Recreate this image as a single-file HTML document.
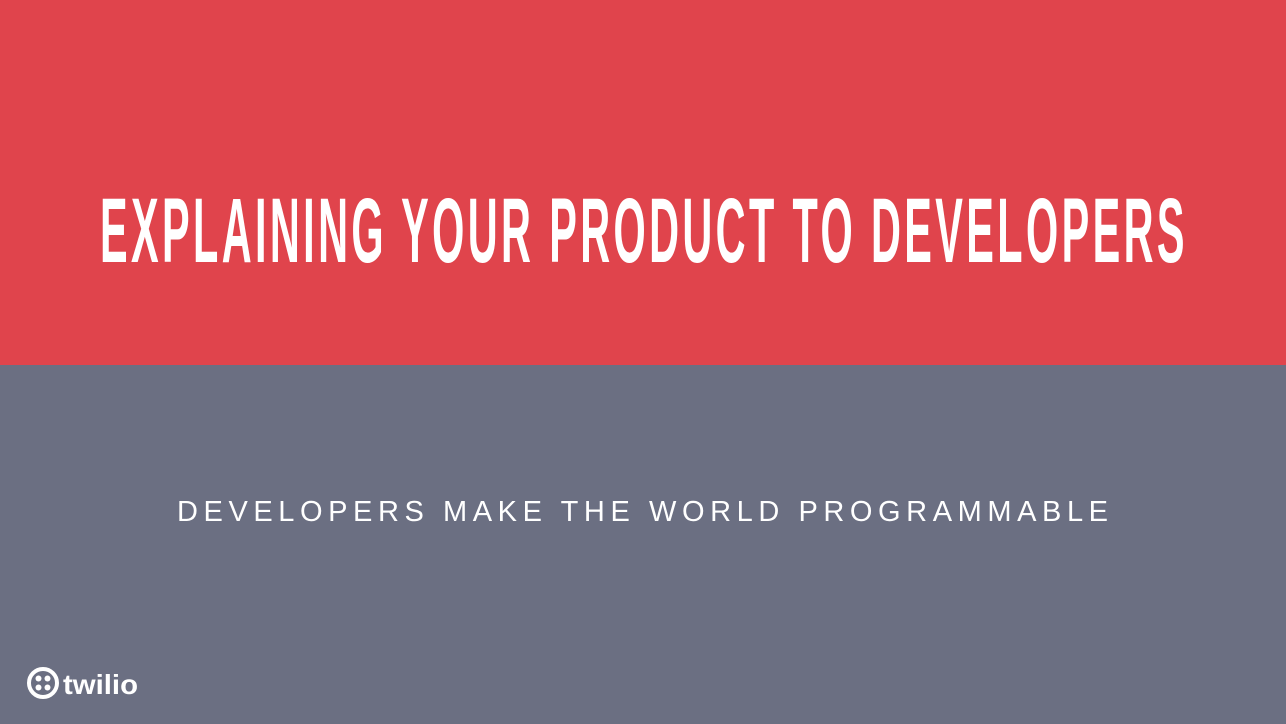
<!DOCTYPE html>
<html><head><meta charset="utf-8"><style>
html,body{margin:0;padding:0;width:1286px;height:724px;overflow:hidden}
</style></head><body>
<svg width="1286" height="724" viewBox="0 0 1286 724" xmlns="http://www.w3.org/2000/svg">
<rect x="0" y="0" width="1286" height="365" fill="#E0444C"/>
<rect x="0" y="365" width="1286" height="359" fill="#6B6F82"/>
<g transform="translate(100,0) scale(0.45,1)">
<text x="0" y="262" font-family="Liberation Sans, sans-serif" font-weight="bold" font-size="92" fill="#fff" textLength="2410" lengthAdjust="spacing">EXPLAINING YOUR PRODUCT TO DEVELOPERS</text>
</g>
<text x="177" y="521" font-family="Liberation Sans, sans-serif" font-size="29" fill="#fff" textLength="931" lengthAdjust="spacing">DEVELOPERS MAKE THE WORLD PROGRAMMABLE</text>
<circle cx="43" cy="683" r="14" fill="none" stroke="#fff" stroke-width="4"/>
<circle cx="38.5" cy="678.5" r="3" fill="#fff"/>
<circle cx="47.5" cy="678.5" r="3" fill="#fff"/>
<circle cx="38.5" cy="687.5" r="3" fill="#fff"/>
<circle cx="47.5" cy="687.5" r="3" fill="#fff"/>
<text x="63" y="694" font-family="Liberation Sans, sans-serif" font-weight="bold" font-size="28" fill="#fff" textLength="75" lengthAdjust="spacingAndGlyphs">twilio</text>
</svg>
</body></html>
